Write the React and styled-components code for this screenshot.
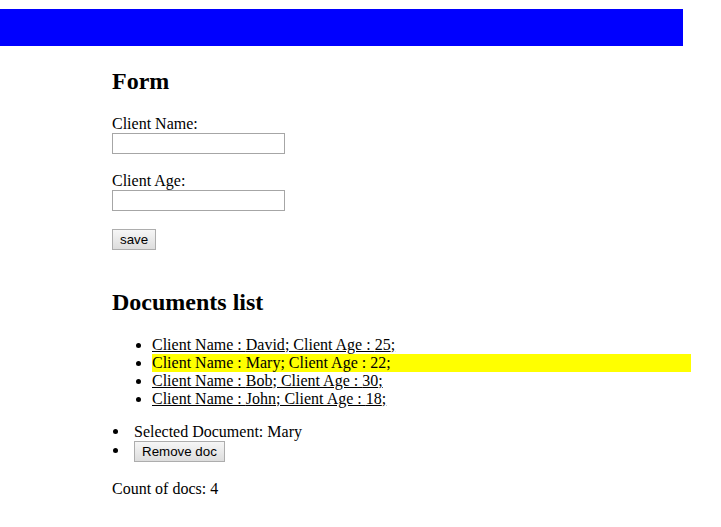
import React, { useState } from "react";
import styled, { createGlobalStyle } from "styled-components";

const GlobalStyle = createGlobalStyle`
  body {
    margin: 0;
    background: #fff;
    color: #000;
    font-family: "Liberation Serif", "Times New Roman", serif;
    font-size: 16px;
  }
`;

const TopBar = styled.div`
  margin-top: 9px;
  width: 683px;
  height: 37px;
  background: #0000ff;
`;

const Main = styled.div`
  margin-left: 112px;
  width: 579px;
`;

const Title = styled.h2`
  font-size: 24px;
  font-weight: bold;
  margin: 21px 0 20px;
  line-height: 28px;
`;

const Field = styled.div`
  margin-bottom: 18px;
  line-height: 18px;
`;

const Label = styled.label`
  display: block;
`;

const TextInput = styled.input`
  box-sizing: border-box;
  width: 173px;
  height: 21px;
  margin: 0;
  border: 1px solid #a6a6a6;
  padding: 1px 2px;
  font-family: "Liberation Sans", Arial, sans-serif;
  font-size: 13.33px;
  display: block;
`;

const Button = styled.button`
  box-sizing: border-box;
  height: 21px;
  padding: 0 7px;
  margin: 0;
  font-family: "Liberation Sans", Arial, sans-serif;
  font-size: 13.33px;
  color: #000;
  border: 1px solid #adadad;
  border-radius: 0;
  background: linear-gradient(#f6f6f6, #dddddd);
  cursor: pointer;
`;

const ButtonRow = styled.div`
  margin-bottom: 38px;
`;

const DocList = styled.ul`
  margin: 0 0 15px;
  padding-left: 40px;
  line-height: 18px;
`;

const DocItem = styled.li`
  background: ${(p) => (p.$selected ? "#ffff00" : "transparent")};
  cursor: pointer;
`;

const DocLink = styled.span`
  text-decoration: ${(p) => (p.$selected ? "none" : "underline")};
`;

const SelectedList = styled.ul`
  margin: 0 0 18px;
  padding: 0;
  list-style: none;
  line-height: 18px;
`;

const SelectedItem = styled.li`
  &::before {
    content: "";
    display: inline-block;
    width: 5px;
    height: 5px;
    border-radius: 50%;
    background: #000;
    margin: 0 16px 0 1px;
    vertical-align: 3px;
  }
`;

const Count = styled.p`
  margin: 0;
  line-height: 18px;
`;

const docs = [
  { name: "David", age: 25 },
  { name: "Mary", age: 22 },
  { name: "Bob", age: 30 },
  { name: "John", age: 18 },
];

export default function App() {
  const [selected, setSelected] = useState(1);

  return (
    <>
      <GlobalStyle />
      <TopBar />
      <Main>
        <Title>Form</Title>
        <Field>
          <Label>Client Name:</Label>
          <TextInput type="text" />
        </Field>
        <Field>
          <Label>Client Age:</Label>
          <TextInput type="text" />
        </Field>
        <ButtonRow>
          <Button>save</Button>
        </ButtonRow>

        <Title>Documents list</Title>
        <DocList>
          {docs.map((d, i) => (
            <DocItem key={d.name} $selected={i === selected} onClick={() => setSelected(i)}>
              <DocLink $selected={i === selected}>
                Client Name : {d.name}; Client Age : {d.age};
              </DocLink>
            </DocItem>
          ))}
        </DocList>
        <SelectedList>
          <SelectedItem>Selected Document: {docs[selected].name}</SelectedItem>
          <SelectedItem>
            <Button>Remove doc</Button>
          </SelectedItem>
        </SelectedList>
        <Count>Count of docs: {docs.length}</Count>
      </Main>
    </>
  );
}
